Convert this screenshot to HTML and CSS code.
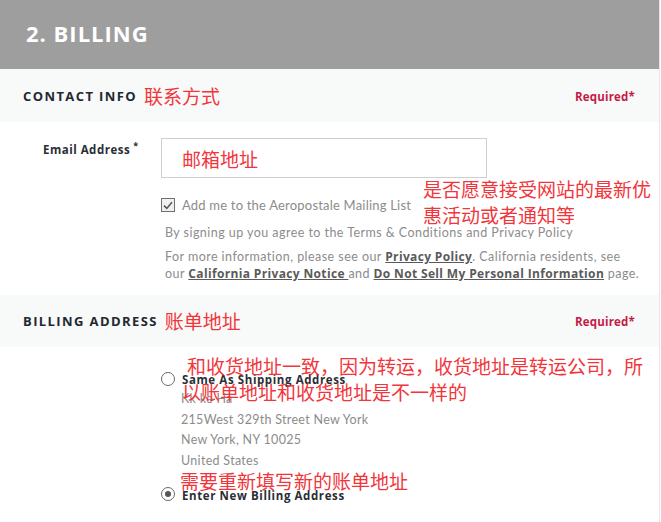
FILE: index.html
```html
<!DOCTYPE html>
<html lang="en">
<head>
<meta charset="utf-8">
<title>Billing</title>
<link rel="stylesheet" href="styles.css">
</head>
<body>
<div class="page">
  <header class="step-head">2. BILLING</header>

  <div class="band">
    <div class="band-title">CONTACT INFO <span class="note note-inline">联系方式</span></div>
    <div class="required">Required*</div>
  </div>

  <section class="contact">
    <div class="field-row">
      <label class="field-label">Email Address<sup>*</sup></label>
      <div class="input-box"><span class="note">邮箱地址</span></div>
    </div>
    <div class="opt-row">
      <span class="checkbox">
        <svg width="10" height="9" viewBox="0 0 10 9"><path d="M1 4.6 L3.8 7.4 L9 1.2" fill="none" stroke="#555" stroke-width="1.5"/></svg>
      </span>
      <span class="opt-text">Add me to the Aeropostale Mailing List</span>
    </div>
    <p class="fine first">By signing up you agree to the Terms &amp; Conditions and Privacy Policy</p>
    <p class="fine">For more information, please see our <a class="lnk">Privacy Policy</a>. California residents, see our <a class="lnk">California Privacy Notice </a> and <a class="lnk">Do Not Sell My Personal Information</a> page.</p>
    <div class="note note-block note-mail">是否愿意接受网站的最新优惠活动或者通知等</div>
  </section>

  <div class="band band-2">
    <div class="band-title">BILLING ADDRESS <span class="note note-inline">账单地址</span></div>
    <div class="required">Required*</div>
  </div>

  <section class="billing">
    <div class="radio-row">
      <span class="radio"></span>
      <span class="radio-label">Same As Shipping Address</span>
    </div>
    <div class="addr">
      <div>Kk ke Ha</div>
      <div>215West 329th Street New York</div>
      <div>New York, NY 10025</div>
      <div>United States</div>
    </div>
    <div class="radio-row second">
      <span class="radio on"></span>
      <span class="radio-label">Enter New Billing Address</span>
    </div>
    <div class="note note-block note-same">和收货地址一致，因为转运，收货地址是转运公司，所以账单地址和收货地址是不一样的</div>
    <div class="note note-block note-new">需要重新填写新的账单地址</div>
  </section>
</div>
</body>
</html>
```
FILE: styles.css
```css
html, body {
  margin: 0;
  padding: 0;
  background: #ffffff;
}
body {
  font-family: "Lato", "Liberation Sans", sans-serif;
  color: #2a2a2a;
}
.page {
  width: 659px;
  height: 522px;
  border-right: 1px solid #e6e6e6;
  overflow: hidden;
}
.step-head {
  height: 69px;
  background: #9e9e9e;
  color: #ffffff;
  font-family: "Open Sans", "Liberation Sans", sans-serif;
  font-weight: 700;
  font-size: 22px;
  letter-spacing: 1px;
  padding-left: 26px;
  line-height: 67px;
  box-sizing: border-box;
}
.band {
  height: 53px;
  background: #f8f9f9;
  display: flex;
  align-items: center;
  justify-content: space-between;
  padding: 0 24px 0 23px;
}
.band-title {
  font-family: "Open Sans", "Liberation Sans", sans-serif;
  font-weight: 700;
  font-size: 13px;
  letter-spacing: 1.4px;
  color: #232830;
  display: flex;
  align-items: center;
  gap: 7px;
}
.required {
  font-family: "Open Sans", "Liberation Sans", sans-serif;
  font-weight: 700;
  font-size: 11.5px;
  letter-spacing: 0.2px;
  color: #c41b45;
  padding-top: 1px;
}
.note {
  font-family: "Noto Sans CJK SC", sans-serif;
  color: #f2353b;
  font-weight: 400;
  letter-spacing: 0;
}
.note-inline {
  font-size: 19px;
  line-height: 20px;
}
.contact {
  position: relative;
  height: 173px;
  padding-top: 16px;
  box-sizing: border-box;
}
.field-row {
  display: flex;
  align-items: flex-start;
}
.field-label {
  width: 118px;
  padding-left: 43px;
  font-family: "Open Sans", "Liberation Sans", sans-serif;
  font-weight: 700;
  font-size: 11.5px;
  letter-spacing: 0.5px;
  color: #2a2e35;
  padding-top: 4px;
}
.field-label sup {
  font-size: 9px;
  margin-left: 3px;
  vertical-align: 5px;
  line-height: 0;
}
.input-box {
  width: 304px;
  height: 38px;
  border: 1px solid #cfcfcf;
  display: flex;
  align-items: center;
  padding-left: 20px;
}
.input-box .note {
  font-size: 19px;
}
.opt-row {
  display: flex;
  align-items: center;
  margin: 19px 0 0 161px;
  gap: 7px;
}
.checkbox {
  width: 12px;
  height: 12px;
  border: 1px solid #707070;
  background: #eef0f2;
  display: flex;
  align-items: center;
  justify-content: center;
}
.opt-text {
  font-size: 13px;
  color: #8c8c8c;
  letter-spacing: 0.2px;
}
.fine {
  margin: 0 0 0 165px;
  font-size: 12.5px;
  color: #8c8c8c;
  letter-spacing: 0.45px;
  line-height: 17px;
  width: 477px;
}
.fine.first {
  margin-top: 11px;
  margin-bottom: 7px;
}
.lnk {
  font-family: "Open Sans", "Liberation Sans", sans-serif;
  font-weight: 700;
  font-size: 12px;
  color: #5a5a5a;
  text-decoration: underline;
  letter-spacing: 0.35px;
}
.note-block {
  position: absolute;
  font-size: 19px;
  line-height: 26px;
}
.note-mail {
  left: 423px;
  top: 54px;
  width: 232px;
}
.band-2 {
  height: 52px;
}
.billing {
  position: relative;
  padding-top: 23px;
}
.radio-row {
  display: flex;
  align-items: center;
  margin-left: 161px;
  gap: 7px;
}
.radio {
  width: 12px;
  height: 12px;
  border: 1.5px solid #6a6a6a;
  border-radius: 50%;
  position: relative;
}
.radio.on::after {
  content: "";
  position: absolute;
  left: 3px;
  top: 3px;
  width: 6px;
  height: 6px;
  border-radius: 50%;
  background: #555;
}
.radio-label {
  font-family: "Open Sans", "Liberation Sans", sans-serif;
  font-weight: 700;
  font-size: 11.5px;
  letter-spacing: 0.6px;
  color: #2a2e35;
  padding-top: 2px;
}
.addr {
  margin-left: 181px;
  font-size: 12.5px;
  color: #8c8c8c;
  letter-spacing: 0.3px;
  line-height: 20.7px;
  margin-top: 2px;
}
.radio-row.second {
  margin-top: 14px;
}
.note-same {
  left: 182px;
  top: 6px;
  width: 466px;
  text-indent: 5px;
}
.note-new {
  left: 180px;
  top: 121px;
}
```
